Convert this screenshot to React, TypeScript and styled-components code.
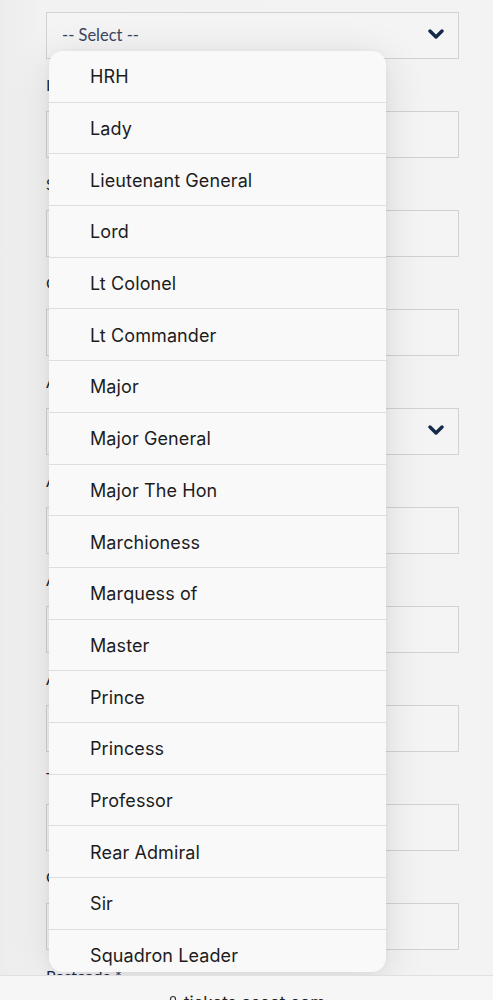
import React from "react";
import styled, { createGlobalStyle } from "styled-components";

const Global = createGlobalStyle`
  html, body { margin: 0; padding: 0; background: #f1f1f1; }
  body { font-family: Lato, "Liberation Sans", sans-serif; overflow: hidden; }
`;

const Page = styled.div`
  position: relative;
  width: 493px;
  height: 1000px;
  overflow: hidden;
  background: linear-gradient(90deg, #ececec 0px, #f2f2f2 40px, #f3f3f3 100%);
`;

const Form = styled.div`
  display: flex;
  flex-direction: column;
  padding: 12px 34px 0 46px;
`;

const Label = styled.div`
  font-size: 16px;
  line-height: 24px;
  color: #1d2a44;
  margin: 14px 0 14px;
`;

const Box = styled.div<{ $select?: boolean }>`
  height: 47px;
  box-sizing: border-box;
  border: 1.5px solid #d2d2d2;
  background: #f4f4f4;
  display: flex;
  align-items: center;
  justify-content: space-between;
  padding: 0 14px 0 15px;
  font-size: 16.5px;
  color: #3a4560;
  padding-bottom: 2px;
`;

const Chevron = () => (
  <svg width="16" height="11" viewBox="0 0 16 11">
    <polyline points="2,2 8,8 14,2" fill="none" stroke="#15294a" strokeWidth="3.4" strokeLinecap="round" strokeLinejoin="round" />
  </svg>
);

const Menu = styled.div`
  position: absolute;
  left: 49px;
  top: 51px;
  width: 337px;
  height: 921px;
  border-radius: 14px;
  overflow: hidden;
  background: #f9f9f9;
  box-shadow: 0 6px 40px rgba(0, 0, 0, 0.12), 0 0 6px rgba(0, 0, 0, 0.04);
`;

const Option = styled.div`
  height: 51.7px;
  box-sizing: border-box;
  border-bottom: 1px solid #dedede;
  padding-left: 41px;
  padding-top: 1px;
  display: flex;
  align-items: center;
  font-family: Inter, "Liberation Sans", sans-serif;
  font-size: 18px;
  color: #1c1c1e;
  letter-spacing: 0.1px;
`;

const UrlBar = styled.div`
  position: absolute;
  left: 0;
  right: 0;
  top: 975px;
  height: 25px;
  background: #f6f6f6;
  border-top: 1px solid #e0e0e0;
  display: flex;
  justify-content: center;
  padding-top: 17px;
  box-sizing: border-box;
  gap: 6px;
  font-family: Inter, "Liberation Sans", sans-serif;
  font-size: 17px;
  color: #222;
  line-height: 20px;
`;

const fields: { label: string; select?: boolean }[] = [
  { label: "Initials *" },
  { label: "Surname *" },
  { label: "Company" },
  { label: "Address type *", select: true },
  { label: "Address line 1 *" },
  { label: "Address line 2" },
  { label: "Address line 3" },
  { label: "Town *" },
  { label: "County" },
];

const options = [
  "HRH",
  "Lady",
  "Lieutenant General",
  "Lord",
  "Lt Colonel",
  "Lt Commander",
  "Major",
  "Major General",
  "Major The Hon",
  "Marchioness",
  "Marquess of",
  "Master",
  "Prince",
  "Princess",
  "Professor",
  "Rear Admiral",
  "Sir",
  "Squadron Leader",
];

export default function App() {
  return (
    <Page>
      <Global />
      <Form>
        <Box $select>
          <span>-- Select --</span>
          <Chevron />
        </Box>
        {fields.map((f) => (
          <React.Fragment key={f.label}>
            <Label>{f.label}</Label>
            <Box $select={f.select}>{f.select ? <><span /><Chevron /></> : null}</Box>
          </React.Fragment>
        ))}
        <Label>Postcode *</Label>
      </Form>
      <Menu>
        {options.map((o) => (
          <Option key={o}>{o}</Option>
        ))}
      </Menu>
      <UrlBar>
        <svg width="10" height="14" viewBox="0 0 10 14" style={{ marginTop: 2 }}>
          <path d="M2.5 6V4a2.5 2.5 0 0 1 5 0v2" fill="none" stroke="#333" strokeWidth="1.2" />
          <rect x="1" y="6" width="8" height="7" rx="1.2" fill="#333" />
        </svg>
        <span>tickets.ascot.com</span>
      </UrlBar>
    </Page>
  );
}
